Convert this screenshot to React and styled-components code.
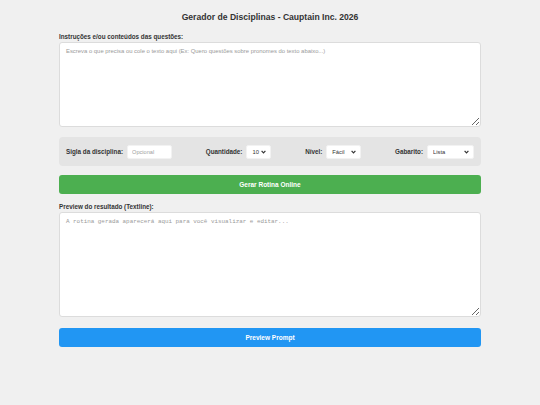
import React, { useState } from "react";
import styled, { createGlobalStyle } from "styled-components";

const GlobalStyle = createGlobalStyle`
  html, body {
    margin: 0;
    padding: 0;
    background: #f0f0f0;
    font-family: "Liberation Sans", Arial, sans-serif;
    color: #333;
  }
`;

const Page = styled.div`
  width: 422px;
  margin: 0 auto;
  padding-top: 12px;
  display: flex;
  flex-direction: column;
`;

const Title = styled.h1`
  margin: 0 0 11px;
  font-size: 8.6px;
  line-height: 10px;
  font-weight: bold;
  text-align: center;
  color: #333;
`;

const Label = styled.label`
  display: block;
  font-size: 6.3px;
  line-height: 7px;
  font-weight: bold;
  color: #333;
  margin-bottom: 2px;
`;

const TextBox = styled.textarea`
  display: block;
  box-sizing: border-box;
  width: 100%;
  height: ${(p) => p.$height}px;
  padding: 5px 6px;
  border: 1px solid #dcdcdc;
  border-radius: 3px;
  background: #fff;
  font-family: ${(p) =>
    p.$mono ? '"Liberation Mono", "Courier New", monospace' : '"Liberation Sans", Arial, sans-serif'};
  font-size: 5.9px;
  color: #333;
  resize: vertical;
  outline: none;

  &::placeholder {
    color: #9a9a9a;
  }
`;

const Options = styled.div`
  box-sizing: border-box;
  height: 29px;
  margin-top: 10px;
  padding: 0 7px;
  background: #e4e4e4;
  border-radius: 4px;
  display: flex;
  justify-content: space-between;
  align-items: center;
`;

const Field = styled.div`
  display: flex;
  align-items: center;
  gap: 4px;
  font-size: 6.3px;
  font-weight: bold;
  color: #333;
`;

const SmallInput = styled.input`
  box-sizing: border-box;
  width: 45px;
  height: 14px;
  padding: 0 4px;
  border: 1px solid #f2f2f2;
  border-radius: 2px;
  background: #fff;
  font-family: "Liberation Sans", Arial, sans-serif;
  font-size: 5.6px;
  color: #333;
  outline: none;

  &::placeholder {
    color: #a0a0a0;
  }
`;

const SelectWrap = styled.div`
  position: relative;
  width: ${(p) => p.$width}px;
  height: 14px;
`;

const Select = styled.select`
  appearance: none;
  -webkit-appearance: none;
  box-sizing: border-box;
  width: 100%;
  height: 100%;
  padding: 0 0 0 5px;
  border: 1px solid #f2f2f2;
  border-radius: 2px;
  background: #fff;
  font-family: "Liberation Sans", Arial, sans-serif;
  font-size: 5.8px;
  font-weight: normal;
  color: #333;
  outline: none;
`;

const Chevron = styled.svg`
  position: absolute;
  right: 5px;
  top: 5px;
  width: 5px;
  height: 4px;
  pointer-events: none;
`;

const Button = styled.button`
  display: block;
  width: 100%;
  height: 19px;
  border: none;
  border-radius: 3px;
  background: ${(p) => p.$color};
  color: #fff;
  font-family: "Liberation Sans", Arial, sans-serif;
  font-size: 6.5px;
  font-weight: bold;
  cursor: pointer;
  margin-top: ${(p) => p.$top}px;
`;

const Section = styled.div`
  margin-top: ${(p) => p.$top}px;
`;

function Dropdown({ width, value, options }) {
  return (
    <SelectWrap $width={width}>
      <Select defaultValue={value}>
        {options.map((o) => (
          <option key={o}>{o}</option>
        ))}
      </Select>
      <Chevron viewBox="0 0 5 4">
        <path d="M0.6 0.8 L2.5 2.8 L4.4 0.8" fill="none" stroke="#333" strokeWidth="1.2" />
      </Chevron>
    </SelectWrap>
  );
}

export default function App() {
  const [instructions, setInstructions] = useState("");
  const [preview, setPreview] = useState("");

  return (
    <>
      <GlobalStyle />
      <Page>
        <Title>Gerador de Disciplinas - Cauptain Inc. 2026</Title>

        <Section $top={0}>
          <Label htmlFor="instrucoes">Instruções e/ou conteúdos das questões:</Label>
          <TextBox
            id="instrucoes"
            $height={85}
            value={instructions}
            onChange={(e) => setInstructions(e.target.value)}
            placeholder="Escreva o que precisa ou cole o texto aqui (Ex: Quero questões sobre pronomes do texto abaixo...)"
          />
        </Section>

        <Options>
          <Field>
            Sigla da disciplina:
            <SmallInput placeholder="Opcional" />
          </Field>
          <Field>
            Quantidade:
            <Dropdown width={25} value="10" options={["5", "10", "15", "20"]} />
          </Field>
          <Field>
            Nível:
            <Dropdown width={35} value="Fácil" options={["Fácil", "Médio", "Difícil"]} />
          </Field>
          <Field>
            Gabarito:
            <Dropdown width={47} value="Lista" options={["Lista", "Comentado"]} />
          </Field>
        </Options>

        <Button $color="#4caf50" $top={9}>Gerar Rotina Online</Button>

        <Section $top={9}>
          <Label htmlFor="preview">Preview do resultado (Textline):</Label>
          <TextBox
            id="preview"
            $mono
            $height={105}
            value={preview}
            onChange={(e) => setPreview(e.target.value)}
            placeholder="A rotina gerada aparecerá aqui para você visualizar e editar..."
          />
        </Section>

        <Button $color="#2196f3" $top={11}>Preview Prompt</Button>
      </Page>
    </>
  );
}
